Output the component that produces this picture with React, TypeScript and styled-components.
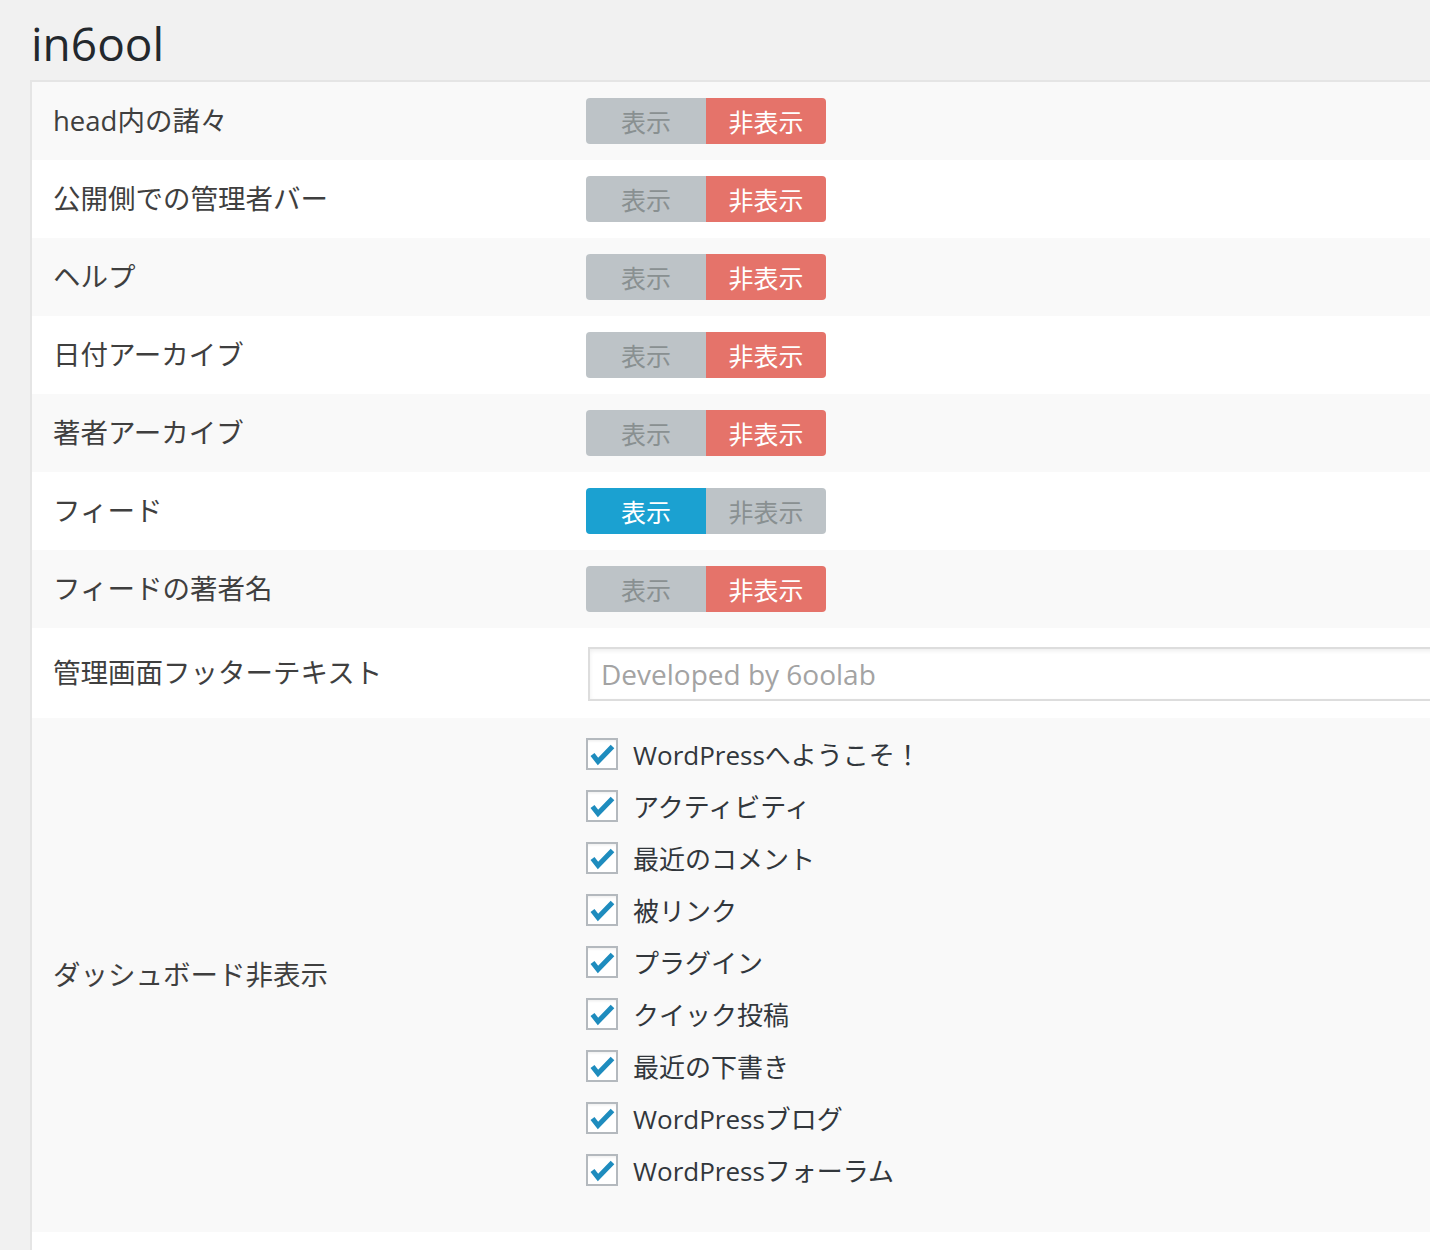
import styled, { createGlobalStyle } from "styled-components";

const GlobalStyle = createGlobalStyle`
  html, body {
    margin: 0;
    padding: 0;
    background: #f1f1f1;
    overflow: hidden;
  }
  body {
    font-family: "Open Sans", "Noto Sans CJK JP", sans-serif;
    color: #444;
  }
`;

const Page = styled.div`
  width: 1430px;
  height: 1250px;
  overflow: hidden;
`;

const Title = styled.h1`
  margin: 0;
  padding: 14px 0 0 31px;
  height: 80px;
  box-sizing: border-box;
  font-size: 46px;
  font-weight: 400;
  line-height: 58px;
  color: #23282d;
`;

const Panel = styled.div`
  margin-left: 30px;
  width: 1500px;
  border-top: 2px solid #e5e5e5;
  border-left: 2px solid #e5e5e5;
  background: #fff;
  padding-bottom: 40px;
`;

const Row = styled.div<{ $alt?: boolean; $height?: number }>`
  display: flex;
  align-items: center;
  height: ${(p) => (p.$height ? `${p.$height}px` : "auto")};
  background: ${(p) => (p.$alt ? "#f9f9f9" : "#fff")};
`;

const Label = styled.div`
  flex-shrink: 0;
  width: 533px;
  padding-left: 21px;
  font-size: 27.5px;
  line-height: 40px;
  color: #3f3f3f;
  font-family: "Open Sans", "Noto Sans CJK JP", sans-serif;
`;

const Value = styled.div`
  flex: 1;
  display: flex;
`;

const Toggle = styled.div`
  display: flex;
  width: 240px;
  height: 46px;
  border-radius: 4px;
  overflow: hidden;
`;

const ToggleBtn = styled.div<{ $active?: boolean; $color: string }>`
  flex: 1;
  display: flex;
  align-items: center;
  justify-content: center;
  font-size: 25px;
  background: ${(p) => (p.$active ? p.$color : "#bdc3c7")};
  color: ${(p) => (p.$active ? "#fff" : "#899091")};
  font-family: "Noto Sans CJK JP", sans-serif;
`;

const TextInput = styled.input`
  width: 1000px;
  height: 54px;
  margin: 2px 0 0 2px;
  box-sizing: border-box;
  border: 2px solid #ddd;
  box-shadow: inset 0 2px 4px rgba(0, 0, 0, 0.07);
  background: #fff;
  padding: 0 11px;
  font-family: "Open Sans", sans-serif;
  font-size: 28px;
  outline: none;
  &::placeholder {
    color: #a3a3a3;
  }
`;

const CheckList = styled.div`
  display: flex;
  flex-direction: column;
  padding: 10px 0 36px;
`;

const CheckItem = styled.label`
  display: flex;
  align-items: center;
  height: 52px;
  font-size: 26px;
  color: #32373c;
  gap: 15px;
`;

const Box = styled.span`
  width: 32px;
  height: 32px;
  flex-shrink: 0;
  background: #fff;
  box-shadow: inset 0 0 0 2px #b4b9be, inset 0 3px 3px rgba(0, 0, 0, 0.08);
  display: flex;
`;

const Check = () => (
  <svg width="32" height="32" viewBox="0 0 32 32">
    <path
      d="M6.5 16.5 L12 23.5 L26.5 8.5"
      fill="none"
      stroke="#1e8cbe"
      strokeWidth="5"
      strokeLinejoin="miter"
    />
  </svg>
);

type ToggleRow = { label: string; show: boolean };

const toggles: ToggleRow[] = [
  { label: "head内の諸々", show: false },
  { label: "公開側での管理者バー", show: false },
  { label: "ヘルプ", show: false },
  { label: "日付アーカイブ", show: false },
  { label: "著者アーカイブ", show: false },
  { label: "フィード", show: true },
  { label: "フィードの著者名", show: false },
];

const widgets = [
  "WordPressへようこそ！",
  "アクティビティ",
  "最近のコメント",
  "被リンク",
  "プラグイン",
  "クイック投稿",
  "最近の下書き",
  "WordPressブログ",
  "WordPressフォーラム",
];

export default function App() {
  return (
    <Page>
      <GlobalStyle />
      <Title>in6ool</Title>
      <Panel>
        {toggles.map((t, i) => (
          <Row key={t.label} $alt={i % 2 === 0} $height={78}>
            <Label>{t.label}</Label>
            <Value>
              <Toggle>
                <ToggleBtn $active={t.show} $color="#1ba1d1">表示</ToggleBtn>
                <ToggleBtn $active={!t.show} $color="#e5736a">非表示</ToggleBtn>
              </Toggle>
            </Value>
          </Row>
        ))}
        <Row $height={90}>
          <Label>管理画面フッターテキスト</Label>
          <Value>
            <TextInput placeholder="Developed by 6oolab" />
          </Value>
        </Row>
        <Row $alt>
          <Label>ダッシュボード非表示</Label>
          <Value>
            <CheckList>
              {widgets.map((w) => (
                <CheckItem key={w}>
                  <Box>
                    <Check />
                  </Box>
                  {w}
                </CheckItem>
              ))}
            </CheckList>
          </Value>
        </Row>
      </Panel>
    </Page>
  );
}
